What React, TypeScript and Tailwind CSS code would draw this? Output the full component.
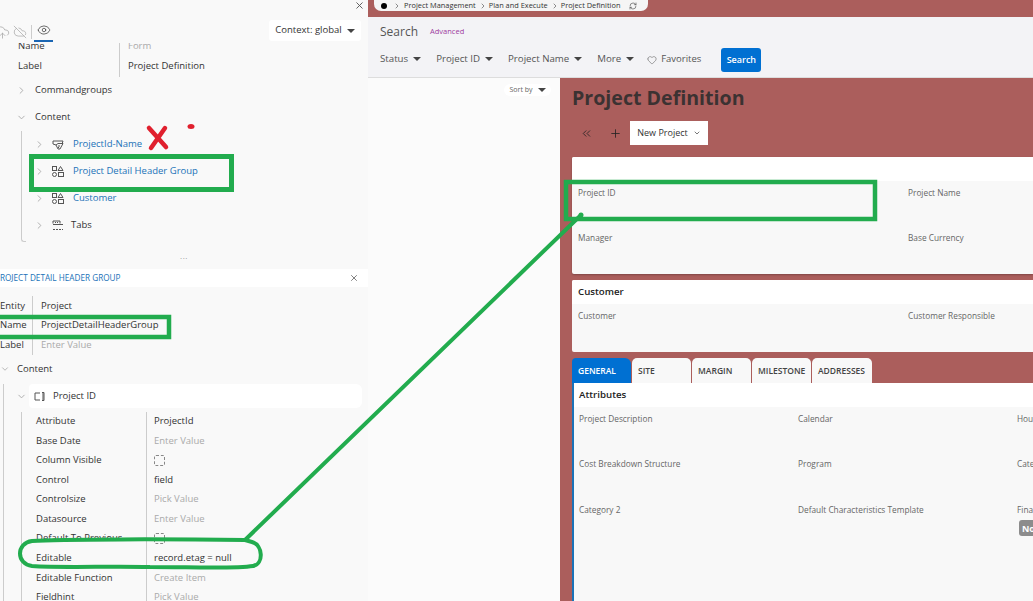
import { ChevronDown, ChevronRight, ChevronsLeft, CloudOff, CloudUpload, Eye, Heart, Plus, RefreshCw, X } from "lucide-react";
import type { ReactNode } from "react";

const props = [
  { name: "Attribute", value: "ProjectId" },
  { name: "Base Date", value: "Enter Value", hint: true },
  { name: "Column Visible", check: true },
  { name: "Control", value: "field" },
  { name: "Controlsize", value: "Pick Value", hint: true },
  { name: "Datasource", value: "Enter Value", hint: true },
  { name: "Default To Previous", check: true },
  { name: "Editable", value: "record.etag = null" },
  { name: "Editable Function", value: "Create Item", hint: true },
  { name: "Fieldhint", value: "Pick Value", hint: true },
];

function Caret() {
  return <span className="ml-[5px] inline-block h-0 w-0 border-x-[4px] border-t-[4px] border-x-transparent border-t-[#444]" />;
}

function GroupIcon() {
  return (
    <svg width="12" height="11" viewBox="0 0 12 11" fill="none" stroke="#555" strokeWidth="1">
      <rect x="0.500" y="0.500" width="4" height="4" />
      <path d="M8.500 0.500l2.500 4h-5z" />
      <circle cx="2.500" cy="8.500" r="2" />
      <rect x="6.500" y="6.500" width="5" height="4" />
    </svg>
  );
}

function FieldsIcon() {
  return (
    <svg width="12" height="11" viewBox="0 0 12 11" fill="none" stroke="#555" strokeWidth="1">
      <path d="M1 2h10l-1 3M1 2v3l3 1" />
      <path d="M4 6l2-1.500h5L8 10H6z" />
      <path d="M6 7h2M6 8.500h1" />
    </svg>
  );
}

function TabsIcon() {
  return (
    <svg width="12" height="11" viewBox="0 0 12 11" fill="none" stroke="#555" strokeWidth="1">
      <path d="M1 3.500V1h7v2.500" />
      <path d="M1 4.500h10" />
      <path d="M1 9.500h10" strokeDasharray="2 1" />
      <path d="M3 2.500h4" strokeDasharray="1 1" />
    </svg>
  );
}

function TreeRow({ open, icon, blue, indent, children }: { open?: boolean; icon?: ReactNode; blue?: boolean; indent?: boolean; children: ReactNode }) {
  return (
    <div className={`flex h-[27px] items-center ${indent ? "pl-[12px]" : "pl-[16px]"}`}>
      {open ? <ChevronDown size={11} className="text-[#aaa]" /> : <ChevronRight size={11} className="text-[#aaa]" />}
      {icon && <span className="ml-[7px] flex w-[12px] justify-center">{icon}</span>}
      <span className={`${icon ? (blue ? "ml-[9px]" : "ml-[7px]") : "ml-[8px]"} ${blue ? "text-[#1b72b8]" : "text-[#333]"}`}>{children}</span>
    </div>
  );
}

function Field({ label }: { label: string }) {
  return <span className="text-[8.300px] leading-[12px] text-[#666]">{label}</span>;
}

function Annotations() {
  return (
    <svg className="pointer-events-none absolute left-0 top-0" width="1033" height="601" viewBox="0 0 1033 601" fill="none" stroke="#22ac4e">
      <rect x="31.500" y="156.500" width="200" height="33" strokeWidth="5" />
      <path d="M-5 317H169V337H-5" strokeWidth="4.500" />
      <rect x="566" y="182" width="309" height="37" strokeWidth="4.500" />
      <path d="M245 540C170 539 60 539 32 541C16 543 16 564 32 566C60 568 110 566 150 567C190 567 235 569 253 566C264 564 263 545 252 542L245 540L581 215" strokeWidth="4" strokeLinejoin="round" />
      <circle cx="581" cy="215" r="2.500" fill="#22ac4e" stroke="none" />
      <path d="M149 128L166 147M165 128L151 148" stroke="#e0202e" strokeWidth="4.500" strokeLinecap="round" />
      <ellipse cx="191" cy="126.500" rx="3.500" ry="2.500" fill="#e0202e" stroke="none" />
    </svg>
  );
}

export default function App() {
  return (
    <main className="relative flex h-[601px] w-[1033px] overflow-hidden bg-[#ab5e5c] font-['Open_Sans',sans-serif] text-[9.500px]">
      <section className="flex w-[368px] shrink-0 flex-col overflow-hidden bg-[#f9f9f9]">
        <div className="relative flex h-[43px] shrink-0 items-start">
          <X size={11} className="absolute right-[3px] top-0 text-[#555]" />
          <div className="ml-[-5px] mt-[22px] flex items-center text-[#aaa]">
            <CloudUpload size={15} strokeWidth={1.300} />
            <CloudOff size={14} strokeWidth={1.300} className="ml-[3px]" />
            <span className="ml-[4px] h-[14px] w-px bg-[#ccc]" />
            <div className="ml-[2px] flex h-[20px] w-[19px] items-center justify-center border-b-2 border-[#1b66b3] pb-[3px] text-[#444]">
              <Eye size={14} strokeWidth={1.300} />
            </div>
          </div>
          <div className="ml-auto mr-[7px] mt-[20px] flex h-[21px] w-[92px] items-center justify-center rounded-[3px] bg-white text-[#333]">
            Context: global
            <Caret />
          </div>
        </div>

        <div className="h-[34px] shrink-0 overflow-hidden">
          <div className="-mt-[7px] grid grid-cols-[119px_1fr]">
            <span className="flex h-[20px] items-center pl-[18px] text-[#333]">Name</span>
            <span className="flex h-[20px] items-center border-l border-[#ccc] pl-[8px] text-[#aaa]">Form</span>
            <span className="flex h-[21px] items-center pl-[18px] text-[#333]">Label</span>
            <span className="flex h-[21px] items-center border-l border-[#ccc] pl-[8px] text-[#333]">Project Definition</span>
          </div>
        </div>

        <div className="shrink-0">
          <TreeRow>Commandgroups</TreeRow>
          <TreeRow open>Content</TreeRow>
          <div className="ml-[21px] border-l border-[#ccc]">
            <TreeRow indent blue icon={<FieldsIcon />}>ProjectId-Name</TreeRow>
            <TreeRow indent blue icon={<GroupIcon />}>Project Detail Header Group</TreeRow>
            <TreeRow indent blue icon={<GroupIcon />}>Customer</TreeRow>
            <TreeRow indent icon={<TabsIcon />}>Tabs</TreeRow>
          </div>
          <div className="ml-[21px] h-[3px] w-[5px] rounded-bl-[3px] border-b border-l border-[#ccc]" />
        </div>

        <div className="flex h-[27px] shrink-0 items-center justify-center text-[8px] leading-none tracking-[0.5px] text-[#999]">...</div>

        <div className="flex h-[18px] shrink-0 items-center justify-between overflow-hidden bg-white pr-[9px]">
          <span className="-ml-[5px] whitespace-nowrap text-[8.200px] text-[#1b72b8]">PROJECT DETAIL HEADER GROUP</span>
          <X size={10} className="text-[#666]" />
        </div>

        <div className="mt-[9px] grid shrink-0 grid-cols-[32px_1fr] text-[#333]">
          <span className="flex h-[19.500px] items-center">Entity</span>
          <span className="flex h-[19.500px] items-center border-l border-[#ccc] pl-[8px]">Project</span>
          <span className="flex h-[19.500px] items-center">Name</span>
          <span className="flex h-[19.500px] items-center border-l border-[#ccc] pl-[8px]">ProjectDetailHeaderGroup</span>
          <span className="flex h-[19.500px] items-center">Label</span>
          <span className="flex h-[19.500px] items-center border-l border-[#ccc] pl-[8px] text-[#aaa]">Enter Value</span>
        </div>

        <div className="flex h-[29px] shrink-0 items-center">
          <ChevronDown size={10} className="text-[#aaa]" />
          <span className="ml-[7px] text-[#333]">Content</span>
        </div>

        <div className="ml-[3px] border-l border-[#ccc]">
          <div className="flex h-[25px] items-center pl-[12px]">
            <ChevronDown size={11} className="text-[#aaa]" />
            <div className="ml-[2px] flex h-[24px] w-[333px] items-center rounded-l-[4px] rounded-r-[6px] bg-white pl-[5px] text-[#333]">
              <svg width="12" height="11" viewBox="0 0 12 11" fill="none" stroke="#555" strokeWidth="1">
                <path d="M6 2H1v7h5M8 1.500h2v8H8M9 1v9" />
              </svg>
              <span className="ml-[7px]">Project ID</span>
            </div>
          </div>
          <div className="ml-[17px] mt-[3px] grid grid-cols-[124px_1fr] border-l border-[#ccc] text-[#333]">
            {props.map((p) => (
              <div key={p.name} className="contents">
                <span className="flex h-[19.550px] items-center whitespace-nowrap pl-[14px]">{p.name}</span>
                <span className={`flex h-[19.550px] items-center border-l border-[#ccc] pl-[7px] ${p.hint ? "text-[#aaa]" : ""}`}>
                  {p.check ? <span className="h-[11px] w-[11px] rounded-[2px] border border-dashed border-[#888]" /> : p.value}
                </span>
              </div>
            ))}
          </div>
        </div>
      </section>

      <section className="flex min-w-0 flex-1 flex-col">
        <div className="h-[17px] shrink-0 pl-[6px]">
          <div className="flex h-[11px] w-[274px] items-center whitespace-nowrap rounded-b-[7px] bg-[#f5f5f5] pl-[7px] text-[7.400px] text-[#333]">
            <span className="h-[6px] w-[6px] rounded-full bg-black" />
            <ChevronRight size={8} className="ml-[6px] text-[#555]" />
            <span className="ml-[3px]">Project Management</span>
            <ChevronRight size={8} className="ml-[3px] text-[#555]" />
            <span className="ml-[2px]">Plan and Execute</span>
            <ChevronRight size={8} className="ml-[3px] text-[#555]" />
            <span className="ml-[2px]">Project Definition</span>
            <RefreshCw size={8} className="ml-[9px] text-[#555]" />
          </div>
        </div>

        <div className="h-[61px] shrink-0 border-b border-[#ddd] bg-[#f3f3f6] pl-[12px] text-[9.700px] text-[#555]">
          <div className="flex h-[28px] items-center pt-[1px]">
            <span className="text-[12px] text-[#555]">Search</span>
            <span className="ml-[12px] text-[7.500px] text-[#9c3ba0]">Advanced</span>
          </div>
          <div className="flex h-[28px] items-center pt-[1px]">
            <span className="flex items-center">Status<Caret /></span>
            <span className="ml-[15px] flex items-center">Project ID<Caret /></span>
            <span className="ml-[15px] flex items-center">Project Name<Caret /></span>
            <span className="ml-[15px] flex items-center">More<Caret /></span>
            <Heart size={10} strokeWidth={1.300} className="ml-[13px]" />
            <span className="ml-[4px] text-[9.500px]">Favorites</span>
            <span className="ml-[20px] flex h-[24px] w-[40px] items-center justify-center rounded-[3px] bg-[#0070d2] text-[9px] font-semibold text-white">Search</span>
          </div>
        </div>

        <div className="flex min-h-0 flex-1">
          <aside className="w-[192px] shrink-0 bg-[#fbfbfb] pt-[6px]">
            <div className="ml-[136px] flex h-[12px] w-[47px] items-center justify-center rounded-full bg-white text-[7px] text-[#666]">
              Sort by
              <Caret />
            </div>
          </aside>

          <div className="min-w-0 flex-1 pl-[12px]">
            <h1 className="mt-[5px] text-[19.600px] font-bold leading-[30px] text-[#3b3232]">Project Definition</h1>
            <div className="mt-[8px] flex h-[24px] items-center text-[#222]">
              <ChevronsLeft size={13} strokeWidth={1.500} className="ml-[8px]" />
              <Plus size={13} strokeWidth={1.500} className="ml-[16px]" />
              <div className="ml-[8px] flex h-[24px] w-[78px] items-center justify-center bg-white text-[9px] text-[#333]">
                New Project
                <ChevronDown size={8} className="ml-[5px]" />
              </div>
            </div>

            <div className="mt-[12px] h-[117px] overflow-hidden rounded-l-[2px] bg-[#f8f8f8] shadow-[0_1px_2px_rgba(0,0,0,0.25)]">
              <div className="h-[24px] bg-white" />
              <div className="grid grid-cols-[330px_1fr] pl-[6px] pt-[5px]">
                <div className="h-[45px]"><Field label="Project ID" /></div>
                <div><Field label="Project Name" /></div>
                <div><Field label="Manager" /></div>
                <div><Field label="Base Currency" /></div>
              </div>
            </div>

            <div className="mt-[6px] h-[72px] overflow-hidden rounded-l-[2px] bg-[#f8f8f8]">
              <div className="flex h-[24px] items-center bg-white pl-[6px] text-[9.700px] font-semibold text-[#222]">Customer</div>
              <div className="grid grid-cols-[330px_1fr] pl-[6px] pt-[6px]">
                <Field label="Customer" />
                <Field label="Customer Responsible" />
              </div>
            </div>

            <div className="mt-[6px] flex h-[25px] gap-px text-[8.500px] font-semibold">
              <span className="flex w-[59px] items-center rounded-tl-[4px] rounded-tr-[6px] bg-[#0070d2] pl-[6px] pt-[1px] text-white">GENERAL</span>
              <span className="flex w-[59px] items-center rounded-t-[5px] bg-[#f8f8f8] pl-[6px] pt-[1px] text-[#444]">SITE</span>
              <span className="flex w-[59px] items-center rounded-t-[5px] bg-[#f8f8f8] pl-[6px] pt-[1px] text-[#444]">MARGIN</span>
              <span className="flex w-[59px] items-center rounded-t-[5px] bg-[#f8f8f8] pl-[6px] pt-[1px] text-[#444]">MILESTONE</span>
              <span className="flex w-[60px] items-center rounded-t-[5px] bg-[#f8f8f8] pl-[6px] pt-[1px] text-[#444]">ADDRESSES</span>
            </div>

            <div className="h-[218px] border-l-2 border-[#1b72b8] bg-[#f8f8f8]">
              <div className="flex h-[24px] items-center bg-white pl-[5px] text-[9.700px] font-semibold text-[#222]">Attributes</div>
              <div className="grid grid-cols-[219px_219px_1fr] pl-[5px] pt-[5px]">
                <div className="h-[45px]"><Field label="Project Description" /></div>
                <div><Field label="Calendar" /></div>
                <div className="whitespace-nowrap"><Field label="Hours Per Day" /></div>
                <div className="h-[46px]"><Field label="Cost Breakdown Structure" /></div>
                <div><Field label="Program" /></div>
                <div className="whitespace-nowrap"><Field label="Category 1" /></div>
                <div><Field label="Category 2" /></div>
                <div><Field label="Default Characteristics Template" /></div>
                <div className="whitespace-nowrap">
                  <Field label="Financial" />
                  <div className="ml-[2px] mt-[3px] flex h-[16px] w-[30px] items-center rounded-[3px] bg-[#8c8c8c] pl-[3px] text-[9px] font-bold text-white">No</div>
                </div>
              </div>
            </div>
          </div>
        </div>
      </section>

      <Annotations />
    </main>
  );
}
